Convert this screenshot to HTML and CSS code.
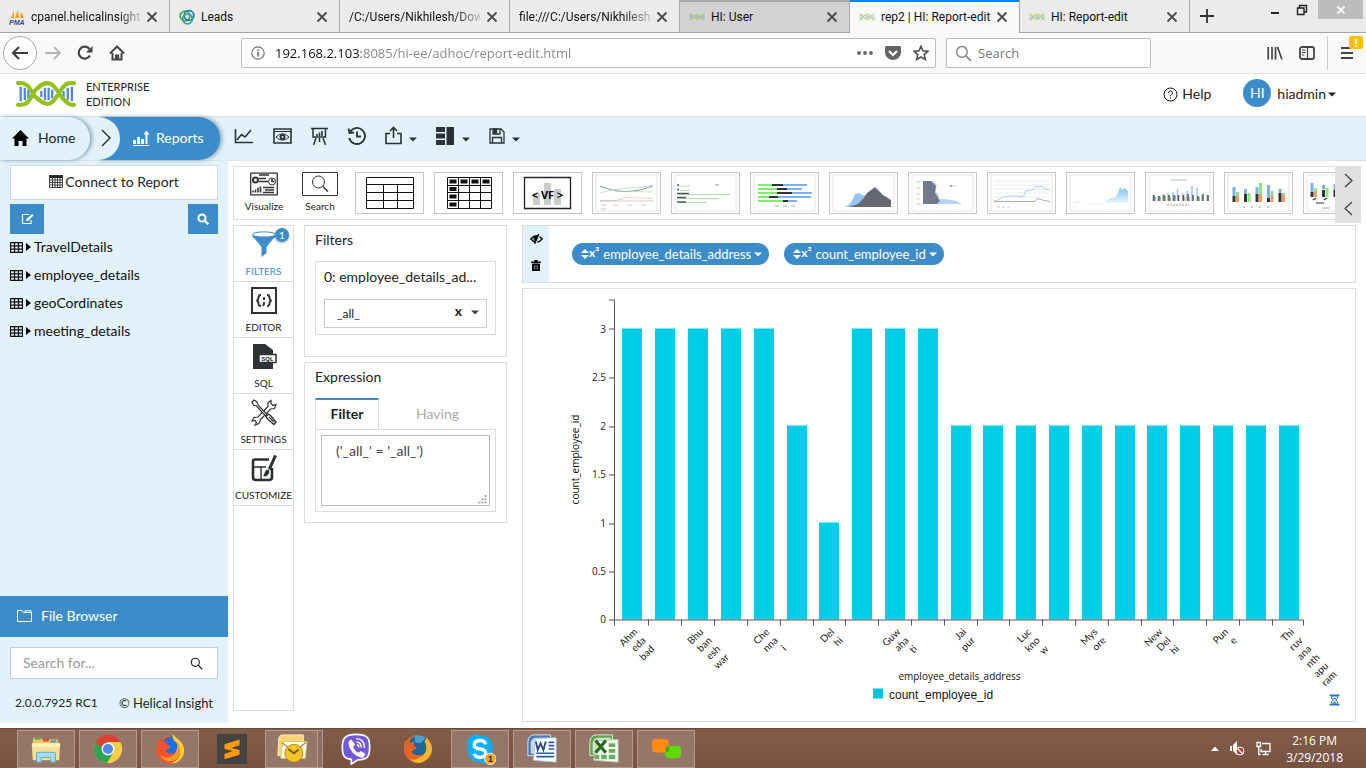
FILE: index.html
```html
<!DOCTYPE html>
<html lang="en">
<head>
<meta charset="utf-8">
<title>rep2 | HI: Report-edit</title>
<link rel="stylesheet" href="styles.css">
</head>
<body>
<svg class="defs" width="0" height="0" aria-hidden="true">
  <symbol id="x" viewBox="0 0 12 12"><path d="M1.500 1.500l9 9M10.500 1.500l-9 9" stroke="#4a4a4a" stroke-width="1.800" fill="none"/></symbol>
  <symbol id="caret" viewBox="0 0 8 5"><path d="M0 .5h8L4 4.500z" fill="currentColor"/></symbol>
  <symbol id="dna" viewBox="0 0 58 26">
    <path d="M4.500 6v14M8.500 7v12M12 9v8M24.500 10v6M28 7v12M31.500 7v12M35 9v8M46 10v6M50 7v12M54 6v14" stroke="#4f86e0" stroke-width="2.200"/>
    <path d="M2 2.500C14 1 14 12 19 16s9 8 14 6 8-10 12-15 7-5 11-4.500M2 23.500C14 25 14 14 19 9s9-8 14-6 8 9 12 14 7 7 11 6.500" fill="none" stroke="#93c11c" stroke-width="4" stroke-linecap="round"/>
  </symbol>
  <symbol id="mag" viewBox="0 0 16 16"><circle cx="6.500" cy="6.500" r="5" fill="none" stroke="currentColor" stroke-width="1.400"/><path d="M10 10l5 5" stroke="currentColor" stroke-width="1.600"/></symbol>
  <symbol id="grid" viewBox="0 0 13 11"><path d="M.5.500h12v10H.5zM.5 3.800h12M.5 7.200h12M4.500.500v10M8.500.500v10" fill="none" stroke="#111" stroke-width="1.300"/></symbol>
  <symbol id="sort" viewBox="0 0 8 12"><path d="M0 5l4-4 4 4zM0 7l4 4 4-4z" fill="#fff"/></symbol>
</svg>

<div class="tabstrip">
  <div class="tab">
    <svg class="fav" viewBox="0 0 16 16"><path d="M2 9l3-7v7zM6 9l3-8 1 8zM11 9l1-6 3 6z" fill="#f79a1b"/><text x="0" y="15.500" class="pma">PMA</text></svg>
    <span class="tab-title faded">cpanel.helicalinsight</span><button class="close" aria-label="Close tab"><svg viewBox="0 0 12 12"><use href="#x"/></svg></button>
  </div>
  <div class="tab">
    <svg class="fav" viewBox="0 0 16 16" fill="none" stroke-width="1.800"><circle cx="6" cy="7" r="4.800" stroke="#4aa83c"/><circle cx="10" cy="6.500" r="4.800" stroke="#1f78b8"/><circle cx="8.500" cy="10" r="4.800" stroke="#2fa5a0"/></svg>
    <span class="tab-title">Leads</span><button class="close" aria-label="Close tab"><svg viewBox="0 0 12 12"><use href="#x"/></svg></button>
  </div>
  <div class="tab"><span class="tab-title faded">/C:/Users/Nikhilesh/Dow</span><button class="close" aria-label="Close tab"><svg viewBox="0 0 12 12"><use href="#x"/></svg></button></div>
  <div class="tab"><span class="tab-title faded">file:///C:/Users/Nikhilesh</span><button class="close" aria-label="Close tab"><svg viewBox="0 0 12 12"><use href="#x"/></svg></button></div>
  <div class="tab hover"><svg class="fav pale" viewBox="0 0 58 26"><use href="#dna"/></svg><span class="tab-title">HI: User</span><button class="close" aria-label="Close tab"><svg viewBox="0 0 12 12"><use href="#x"/></svg></button></div>
  <div class="tab active"><svg class="fav pale" viewBox="0 0 58 26"><use href="#dna"/></svg><span class="tab-title">rep2 | HI: Report-edit</span><button class="close" aria-label="Close tab"><svg viewBox="0 0 12 12"><use href="#x"/></svg></button></div>
  <div class="tab"><svg class="fav pale" viewBox="0 0 58 26"><use href="#dna"/></svg><span class="tab-title">HI: Report-edit</span><button class="close" aria-label="Close tab"><svg viewBox="0 0 12 12"><use href="#x"/></svg></button></div>
  <button class="newtab" aria-label="New tab"><svg width="14" height="14" viewBox="0 0 14 14"><path d="M7 0v14M0 7h14" stroke="#333" stroke-width="1.800"/></svg></button>
  <div class="win">
    <button aria-label="Minimize"><svg width="9" height="12" viewBox="0 0 9 12"><path d="M0 9h8" stroke="#222" stroke-width="2"/></svg></button>
    <button aria-label="Restore"><svg width="12" height="12" viewBox="0 0 12 12"><path d="M1.500 4h6.500v6.500H1.500zM3.500 4V1.500h7V8H8" fill="none" stroke="#222" stroke-width="1.400"/></svg></button>
    <button class="win-close" aria-label="Close"><svg width="10" height="10" viewBox="0 0 10 10"><path d="M1.500 1.500l7 7M8.500 1.500l-7 7" stroke="#fff" stroke-width="1.800"/></svg></button>
  </div>
</div>

<div class="toolbar">
  <button class="back" aria-label="Back"><svg width="18" height="16" viewBox="0 0 18 16"><path d="M17 8H2M8 2L2 8l6 6" fill="none" stroke="#3c3c3c" stroke-width="2"/></svg></button>
  <button aria-label="Forward"><svg width="17" height="16" viewBox="0 0 17 16"><path d="M0 8h15M9 2l6 6-6 6" fill="none" stroke="#b4b4b4" stroke-width="1.800"/></svg></button>
  <button aria-label="Reload"><svg width="16" height="16" viewBox="0 0 16 16"><path d="M13 10.500A6 6 0 1 1 12.500 4" fill="none" stroke="#444" stroke-width="2.200"/><path d="M15.500 1v6.500H9z" fill="#444"/></svg></button>
  <button aria-label="Home page"><svg width="16" height="16" viewBox="0 0 16 16"><path d="M1 8.500L8 1.500l7 7M3.500 8v6.500h9V8M7 14.500v-4h2.200v4" fill="none" stroke="#444" stroke-width="2"/></svg></button>
  <div class="urlbar">
    <svg width="14" height="14" viewBox="0 0 14 14"><circle cx="7" cy="7" r="6.200" fill="none" stroke="#777" stroke-width="1.200"/><path d="M7 6v4.500M7 3.500v1.500" stroke="#666" stroke-width="1.600"/></svg>
    <input class="url" aria-label="Address" value="192.168.2.103:8085/hi-ee/adhoc/report-edit.html">
    <button aria-label="Page actions"><svg width="16" height="16" viewBox="0 0 16 16" fill="#666"><circle cx="2" cy="8" r="1.900"/><circle cx="8" cy="8" r="1.900"/><circle cx="14" cy="8" r="1.900"/></svg></button>
    <button aria-label="Save to Pocket"><svg width="16" height="16" viewBox="0 0 16 16"><path d="M1.500 1h13Q16 1 16 2.500V7.500a8 7.500 0 0 1-16 0V2.500Q0 1 1.500 1z" fill="#666"/><path d="M4 6l4 4 4-4" fill="none" stroke="#fff" stroke-width="2"/></svg></button>
    <button aria-label="Bookmark"><svg width="16" height="16" viewBox="0 0 16 16"><path d="M8 1.300l2 4.500 4.900.5-3.700 3.300 1.100 4.800L8 11.900l-4.300 2.500 1.100-4.800L1.100 6.300 6 5.800z" fill="none" stroke="#555" stroke-width="1.700"/></svg></button>
  </div>
  <div class="searchbar">
    <svg width="17" height="17" viewBox="0 0 16 16" color="#888"><use href="#mag"/></svg>
    <input aria-label="Search the web" placeholder="Search">
  </div>
  <div class="right-tools">
    <button aria-label="Library"><svg width="16" height="16" viewBox="0 0 16 16"><path d="M1.200 2v12.500M5 2v12.500M8.500 2v12.500M10.500 2l4.500 12.500" stroke="#444" stroke-width="1.700" fill="none"/></svg></button>
    <button aria-label="Sidebars"><svg width="16" height="16" viewBox="0 0 16 16"><rect x="1" y="2" width="14" height="12" rx="2" fill="none" stroke="#444" stroke-width="1.800"/><path d="M8.500 2v12M3 5h3.500M3 7.500h3.500M3 10h2.500" stroke="#444" stroke-width="1.200"/></svg></button>
    <button class="menu" aria-label="Menu"><svg width="12" height="14" viewBox="0 0 12 14"><path d="M0 2h12M0 7h12M0 12h12" stroke="#444" stroke-width="2"/></svg><span class="alert">!</span></button>
  </div>
</div>

<header class="brand">
  <svg class="logo" viewBox="0 0 58 26"><use href="#dna"/></svg>
  <div class="edition">ENTERPRISE<br>EDITION</div>
  <a class="help" href="#"><svg width="15" height="15" viewBox="0 0 15 15" fill="none" stroke="#111"><circle cx="7.500" cy="7.500" r="6.500"/><path d="M5.500 6a2 2 0 1 1 2.800 1.800q-.8.400-.8 1.400M7.500 10.300v1.200"/></svg>Help</a>
  <button class="user"><span class="avatar">HI</span><span class="uname">hiadmin</span><svg width="8" height="5" viewBox="0 0 8 5"><use href="#caret"/></svg></button>
</header>

<nav class="crumbs">
  <a class="crumb home" href="#"><svg width="17" height="16" viewBox="0 0 17 16"><path d="M8.500 0L0 8.500h2.500V16h4v-5h4v5h4V8.500H17z"/></svg>Home</a>
  <span class="crumb arrow"><svg width="10" height="18" viewBox="0 0 10 18"><path d="M1 1l8 8-8 8" fill="none" stroke="#222" stroke-width="1.300"/></svg></span>
  <a class="crumb reports" href="#"><svg width="17" height="16" viewBox="0 0 17 16" fill="#fff"><path d="M0 10h3v4H0zM4 7h3v7H4zM8 9h3v5H8zM12.500 4h2v10h-2zM0 15h16v1H0zM10.500 4.500l3-4 3 4z"/></svg>Reports</a>
  <div class="actions">
    <button aria-label="Chart"><svg width="20" height="18" viewBox="0 0 20 18"><path d="M1.500 2v13.500H19M3 13l4.500-5.500L11 10l6-7" fill="none" stroke="#2a3238" stroke-width="1.600"/></svg></button>
    <button aria-label="Preview"><svg width="19" height="16" viewBox="0 0 19 16" fill="none" stroke="#2a3238"><path d="M1 1h17v14H1z" stroke-width="1.600"/><path d="M1 3.500h17"/><path d="M3 9q6.500-6.500 13 0-6.500 6.500-13 0z"/><circle cx="9.500" cy="9" r="2" stroke-width="2"/></svg></button>
    <button aria-label="Present"><svg width="17" height="18" viewBox="0 0 17 18" fill="none" stroke="#2a3238"><path d="M0 1.500h17M2 2v8h12.500V2M5 11l-2.500 7M12 11l2.500 7M8.500 11v4" stroke-width="1.500"/><path d="M6 9V7M8.500 9V5.500M11 9V4" stroke-width="1.600"/></svg></button>
    <button aria-label="History"><svg width="19" height="18" viewBox="0 0 19 18" fill="none" stroke="#2a3238" stroke-width="1.800"><path d="M3 5a8 8 0 1 1-.8 6M10 4.500V9.500h4"/><path d="M1.500 1.500L2.500 6l4.500-.5"/></svg></button>
    <button aria-label="Export"><svg width="17" height="19" viewBox="0 0 17 19" fill="none" stroke="#2a3238" stroke-width="1.600"><path d="M5 7.500H1v10h15v-10h-4M8.500 12V1.500M5 5l3.500-3.500L12 5"/></svg><svg class="dd" width="8" height="5" viewBox="0 0 8 5"><use href="#caret"/></svg></button>
    <button aria-label="Layout"><svg width="19" height="18" viewBox="0 0 19 18" fill="#2a3238"><path d="M0 0h9v5H0zM0 6.500h9v5H0zM0 13h9v5H0zM10.500 0H18v18h-7.500z"/></svg><svg class="dd" width="8" height="5" viewBox="0 0 8 5"><use href="#caret"/></svg></button>
    <button aria-label="Save"><svg width="16" height="16" viewBox="0 0 16 16" fill="none" stroke="#2a3238" stroke-width="1.300"><path d="M1 1h11l3 3v11H1zM4 1v5h7V1M3.500 15V9.500h9V15"/><path d="M5 1h2.500v4H5z" fill="#2a3238"/></svg><svg class="dd" width="8" height="5" viewBox="0 0 8 5"><use href="#caret"/></svg></button>
  </div>
</nav>

<main class="main">
  <aside class="sidebar">
    <button class="connect"><svg width="14" height="13" viewBox="0 0 14 13"><path d="M0 0h14v3H0z" fill="#222"/><path d="M.5.500h13v12H.5zM.5 5h13M.5 7.500h13M.5 10h13M3.500 3v10M6 3v10M8.500 3v10M11 3v10" fill="none" stroke="#333" stroke-width=".9"/></svg>Connect to Report</button>
    <div class="side-tools">
      <button class="sq wide" aria-label="Edit"><svg width="13" height="12" viewBox="0 0 13 12" fill="none" stroke="#fff" stroke-width="1.200"><path d="M8 1.500H1.500v9H10V7"/><path d="M5 8l.5-2L11 1l1.500 1.500L7 8z" fill="#fff" stroke="none"/></svg></button>
      <button class="sq" aria-label="Search tables"><svg width="12" height="12" viewBox="0 0 12 12" fill="none" stroke="#fff"><circle cx="5" cy="5" r="3.600" stroke-width="2"/><path d="M8 8l3.300 3.300" stroke-width="2.400"/></svg></button>
    </div>
    <ul class="tree">
      <li><svg width="13" height="11" viewBox="0 0 13 11"><use href="#grid"/></svg><svg width="5" height="8" viewBox="0 0 5 8"><path d="M0 0l5 4-5 4z"/></svg>TravelDetails</li>
      <li><svg width="13" height="11" viewBox="0 0 13 11"><use href="#grid"/></svg><svg width="5" height="8" viewBox="0 0 5 8"><path d="M0 0l5 4-5 4z"/></svg>employee_details</li>
      <li><svg width="13" height="11" viewBox="0 0 13 11"><use href="#grid"/></svg><svg width="5" height="8" viewBox="0 0 5 8"><path d="M0 0l5 4-5 4z"/></svg>geoCordinates</li>
      <li><svg width="13" height="11" viewBox="0 0 13 11"><use href="#grid"/></svg><svg width="5" height="8" viewBox="0 0 5 8"><path d="M0 0l5 4-5 4z"/></svg>meeting_details</li>
    </ul>
    <button class="filebrowser"><svg width="15" height="12" viewBox="0 0 15 12" fill="none" stroke="#fff"><path d="M.5 11.500V.5h4.500l1.500 2h8v9zM8 2.500V.8h6v2"/></svg>File Browser</button>
    <div class="filesearch"><input aria-label="Search for files" placeholder="Search for..."><button aria-label="Search"><svg width="13" height="13" viewBox="0 0 16 16"><use href="#mag"/></svg></button></div>
    <footer class="side-foot"><span class="ver">2.0.0.7925 RC1</span><span>© Helical Insight</span></footer>
  </aside>

  <section class="content">
    <div class="vizbar">
      <button class="viz"><svg width="28" height="23" viewBox="0 0 28 23" fill="none" stroke="#333"><path d="M.7.700h26.600v21.600H.7z" stroke-width="1.300"/><path d="M9 2.500h10M9 6h7M9 9h9M13 15h11M15 17.500h9M13 20h11" stroke-width="1.300"/><circle cx="5.500" cy="7.500" r="2.500" stroke-width="2"/><circle cx="22" cy="9" r="3.500"/><path d="M22 6.500V9h2.500M3 20v-2M5.500 20v-3M8 20v-5M10.500 20v-6" stroke-width="1.600"/></svg><span>Visualize</span></button>
      <button class="viz"><svg width="36" height="24" viewBox="0 0 36 24" fill="none" stroke="#333"><path d="M.5.500h35v23H.5z"/><circle cx="16.500" cy="10" r="6"/><path d="M21 14.500l5 5" stroke-width="1.500"/></svg><span>Search</span></button>
      <div class="thumbs">
        <button class="thumb" aria-label="Table"><svg viewBox="0 0 67 40" fill="none" stroke="#111"><path d="M10.500 4.500h47v31h-47zM10.500 11.500h47M10.500 19.500h47M10.500 27.500h47M27.500 11.500v24M41.500 11.500v24"/></svg></button>
        <button class="thumb" aria-label="Crosstab"><svg viewBox="0 0 67 40" fill="none" stroke="#111"><path d="M12.500 4.500h44v31h-44zM12.500 12.500h44M12.500 19.500h44M12.500 27.500h44M23.500 4.500v31M34.500 4.500v31M45.500 4.500v31"/><path d="M14.500 8.500h7M25.500 8.500h7M36.500 8.500h7M47.500 8.500h7M14.500 16h7M14.500 23.500h7M14.500 31.500h7" stroke-width="4"/></svg></button>
        <button class="thumb" aria-label="VF"><svg viewBox="0 0 67 40"><path d="M19 20h7v12h-7zM30 10h7v22h-7zM40 16h7v16h-7z" fill="#ccc"/><path d="M10.500 4.500h46v31h-46z" fill="none" stroke="#222" stroke-width="1.300"/><text x="33.500" y="26" text-anchor="middle" class="vf">&lt; VF &gt;</text></svg></button>
        <button class="thumb f" aria-label="Line chart"><svg viewBox="0 0 67 40" fill="none"><path class="fr" d="M3 2h61v36H3z"/><path d="M7 13q15 6 28 5.500T60 13" stroke="#6b7f80" stroke-width=".8"/><path d="M7 20q18-5 30-5t23-3" stroke="#b9daf6" stroke-width=".9"/><path d="M22 18l38 1" stroke="#a5e69b" stroke-width=".7"/><path d="M7 27.500h16l10-3 27 1" stroke="#f4b9a0" stroke-width=".7"/><path d="M7 28h53" stroke="#aab" stroke-width=".6"/><path d="M8 32h5M20 32h5M34 32h5M48 32h5M8 36h5" stroke="#bbb" stroke-width=".8"/></svg></button>
        <button class="thumb f" aria-label="Bar chart"><svg viewBox="0 0 67 40" fill="none"><path class="fr" d="M3 2h61v36H3z"/><path d="M6 13h12M6 17.500h12M6 21.500h52M6 25.500h40M6 29.500h28" stroke="#a5e39c" stroke-width=".9"/><path d="M5 12h2M5 16.500h2M5 20.500h12M5 24.500h9M5 29h9" stroke="#556" stroke-width="1.300"/><path d="M43 12h4" stroke="#ccc" stroke-width="2"/></svg></button>
        <button class="thumb f" aria-label="Stacked bar chart"><svg viewBox="0 0 67 40" fill="none" stroke-width="2"><path class="fr" d="M3 2h61v36H3z"/><path d="M7 12h14M7 16h19M7 20h19M7 24h11M7 28h25" stroke="#82ec70"/><path d="M21 12h11M26 16h10M26 20h15M18 24h9M32 28h5" stroke="#333"/><path d="M32 12h24M36 16h15M41 20h20M27 24h33M37 28h9" stroke="#7cb1ec"/><path d="M24 33h4M32 33h4M40 33h4" stroke="#aaa" stroke-width="1"/></svg></button>
        <button class="thumb f" aria-label="Area chart"><svg viewBox="0 0 67 40"><path class="fr" d="M3 2h61v36H3z"/><path d="M15 34q6-2 10-13l4-1 3 2 3 0 3 12z" fill="#95c5f3"/><path d="M19 34q12-2 18-14l8-6 8 8 8 5v7z" fill="#666a70"/></svg></button>
        <button class="thumb f" aria-label="Inverted area chart"><svg viewBox="0 0 67 40"><path class="fr" d="M3 2h61v36H3z"/><path d="M18 8h6l4 4-2 6 4 4-2 4q18 0 23 4l2 1H18z" fill="#b3d4f2"/><path d="M14 8h8l5 5-1 7 3 4 2 4-3 3H14z" fill="#717b8a"/><path d="M7 9h4M7 15h4M7 21h4M7 26h4M7 31h4" stroke="#f3b9b9"/><path d="M41 13h2" stroke="#555"/><path d="M43 13h4" stroke="#ccc"/></svg></button>
        <button class="thumb f" aria-label="Time series"><svg viewBox="0 0 67 40" fill="none"><path class="fr" d="M3 2h61v36H3z"/><path d="M6 8h56M6 12h56M6 16h56M6 20h56M6 24h56" stroke="#dfeaf5" stroke-width=".8"/><path d="M6 28l4-1 5-3 6-1 8 0 6 1 3-6 6-1 4-4 3 1 3-1 3 3 5 1" stroke="#aed0ef"/><path d="M6 28.500h41l2-3 4 1 3 1 6 1" stroke="#a8a8a8" stroke-width=".9"/><path d="M9 34h14" stroke="#ccc" stroke-dasharray="3 2"/></svg></button>
        <button class="thumb f" aria-label="Gradient area"><svg viewBox="0 0 67 40"><defs><linearGradient id="areafill" x1="0" y1="0" x2="0" y2="1"><stop offset="0" stop-color="#7cc3ee"/><stop offset="1" stop-color="#eef7fd"/></linearGradient></defs><path class="fr" d="M3 2h61v36H3z"/><path d="M6 30l4-2 5 2 14 1 8-1 5-4 6-2 3-4 2-6 2 3 3-2 3 3 0 12H6z" fill="url(#areafill)"/></svg></button>
        <button class="thumb f" aria-label="Column chart"><svg viewBox="0 0 67 40" fill="none"><path class="fr" d="M3 2h61v36H3z"/><path d="M25 7h16" stroke="#aaa" stroke-width=".8"/><path d="M7 28v-6M12 28v-5M17 28v-7M22 28v-8M27 28v-9M31.500 28v-12M36.500 28v-8M41 28v-10M46 28v-15M51 28v-13M56 28v-6M61 28v-6" stroke="#9cc3ea" stroke-width="1.500"/><path d="M8 28v-6M13 28v-5M18 28v-6M23 28v-6M28 28v-6M32.500 28v-6M37.500 28v-6M42 28v-7M47 28v-6M52 28v-5M57 28v-7M62 28v-6" stroke="#555" stroke-width="1.500"/><path d="M9.500 28v-4M14.500 28v-4M19.500 28v-5M24.500 28v-4M29.500 28v-5M39 28v-4M43.500 28v-4M53.500 28v-4" stroke="#a9bb77"/><path d="M21 32h22" stroke="#998" stroke-dasharray="2 1"/></svg></button>
        <button class="thumb f" aria-label="Grouped stacked columns"><svg viewBox="0 0 67 40" fill="none" stroke-width="3"><path class="fr" d="M3 2h61v36H3z"/><path d="M9 23V14M20.500 21V16M32 21V14M43.500 25V12M55 20V16" stroke="#7cb1ec"/><path d="M9 29v-6M20.500 29v-8M32 29v-8M43.500 29v-4M55 29v-9" stroke="#333"/><path d="M12.500 23v-4M24 29v-9M35.500 21V10M47 22v-4M58.500 22v-2" stroke="#8ae878"/><path d="M12.500 29v-6M35.500 29v-8M47 29v-7M58.500 29v-7" stroke="#f49a60"/><path d="M18 34h29" stroke="#999" stroke-width="1" stroke-dasharray="2 6"/></svg></button>
        <button class="thumb f" aria-label="Combined chart"><svg viewBox="0 0 67 40" fill="none" stroke-width="3"><path class="fr" d="M3 2h61v36H3z"/><path d="M8 19V10M19.500 16V12M31 17V11" stroke="#7cb1ec"/><path d="M8 24v-5M19.500 24v-7M31 24v-7" stroke="#333"/><path d="M11.500 19v-4M23 24v-9" stroke="#8ae878"/><path d="M11.500 24v-5" stroke="#f49a60"/><path d="M12 30h8M9 27l3-2M20 27l3-2" stroke="#333" stroke-width="1.200"/><path d="M18 35h8" stroke="#aaa" stroke-width="1"/></svg></button>
      </div>
      <div class="pager"><button aria-label="Next"><svg width="9" height="15" viewBox="0 0 9 15"><path d="M1 1l7 6.500L1 14" fill="none" stroke="#444" stroke-width="1.300"/></svg></button><button aria-label="Previous"><svg width="9" height="15" viewBox="0 0 9 15"><path d="M8 1L1 7.500 8 14" fill="none" stroke="#444" stroke-width="1.300"/></svg></button></div>
    </div>

    <div class="work">
      <div class="rail">
        <button class="rail-item on"><svg width="26" height="27" viewBox="0 0 26 27"><path d="M1 4q0 2 3 4l6.500 8v10l5-4v-6L22 8q3-2 3-4z" fill="#3d8cca"/><ellipse cx="13" cy="3.500" rx="12" ry="2.600" fill="#fff" stroke="#3d8cca"/></svg>FILTERS<span class="count">1</span></button>
        <button class="rail-item"><svg width="26" height="27" viewBox="0 0 26 27"><path d="M1 1h24v25H1z" fill="none" stroke="#333" stroke-width="2"/><path d="M10 8q-2.500 0-2.500 2.500t-2 3q2 .5 2 3T10 19M16 8q2.500 0 2.500 2.500t2 3q-2 .5-2 3T16 19M13 15v2l-1 2" fill="none" stroke="#333" stroke-width="1.900"/><circle cx="13" cy="11.500" r="1.200"/></svg>EDITOR</button>
        <button class="rail-item"><svg width="26" height="27" viewBox="0 0 26 27"><path d="M2 1h12l8 6v19H2z" fill="#2f3336"/><path d="M8 11.500h17v8H8z" fill="#fff" stroke="#2f3336" stroke-width="1.500"/><text x="16.500" y="18" text-anchor="middle" class="sqlmark">SQL</text></svg>SQL</button>
        <button class="rail-item"><svg width="26" height="27" viewBox="0 0 26 27" fill="none" stroke="#333" stroke-width="1.200"><path d="M20 1.500l-3 2v4L7 18l-4 .5-2 3.500 3-.5 1.500 2L4 26l4-1.500 1.500-4L19.500 10l4-.5 1.500-4-3 1-2-2z" fill="#fff"/><path d="M1 3l2-2 3 2 1 3 9 9.500L14.500 17 5.500 7 2.500 6z" fill="#fff"/><path d="M15 17.500l2-2.500 3 2 5 6-2 2.500-6-5z" fill="#fff" stroke-width="1.400"/><path d="M18 18l5 5"/></svg>SETTINGS</button>
        <button class="rail-item"><svg width="26" height="27" viewBox="0 0 26 27" fill="none" stroke="#2b2f31"><path d="M18 4.500H4q-2 0-2 2V22q0 3 3 3h13q3 0 3-3V13" stroke-width="2.600"/><path d="M2 12h13M10 12v12" stroke-width="1.400"/><path d="M24.500.5L18 15" stroke-width="3"/><path d="M17.500 14q3 3-1 7-2 2-5.500 0 2-.5 2-3 1-4 4.500-4z" fill="#2b2f31" stroke="#fff"/></svg>CUSTOMIZE</button>
      </div>

      <div class="panels">
        <section class="panel filters">
          <h2>Filters</h2>
          <div class="fbox">
            <label for="f0">0: employee_details_ad...</label>
            <div class="combo"><select id="f0"><option>_all_</option></select><button class="clear" aria-label="Clear">x</button><svg class="combo-caret" width="8" height="5" viewBox="0 0 8 5"><use href="#caret"/></svg></div>
          </div>
        </section>
        <section class="panel expr">
          <h2>Expression</h2>
          <div class="etabs"><button class="etab sel">Filter</button><button class="etab">Having</button></div>
          <div class="ebody"><textarea aria-label="Filter expression">('_all_' = '_all_')</textarea><svg class="grip" width="9" height="9" viewBox="0 0 9 9" fill="#aaa"><path d="M6.500 0h2v2h-2zM3.500 3.300h2v2h-2zM6.500 3.300h2v2h-2zM.500 6.500h2v2h-2zM3.500 6.500h2v2h-2zM6.500 6.500h2v2h-2z"/></svg></div>
        </section>
      </div>

      <div class="canvas">
        <div class="fields">
          <div class="field-tools">
            <button aria-label="Hide"><svg width="13" height="10" viewBox="0 0 13 10" fill="none" stroke="#000"><path d="M.8 5q5.700-6.500 11.400 0-5.700 6.500-11.400 0z" stroke-width="1.300"/><circle cx="6" cy="4.800" r="2" fill="#000"/><path d="M10 0L5.500 10" stroke="#e1f2fa" stroke-width="1.500"/><path d="M8.800 0L4.500 10" stroke-width="1.300"/></svg></button>
            <button aria-label="Delete"><svg width="10" height="11" viewBox="0 0 10 11"><path d="M0 1.500h3L3.500 0h3L7 1.500h3V3H0zM1 3.500h8V11H1z"/><path d="M3.300 5v4.500M5 5v4.500M6.700 5v4.500" stroke="#9ab" stroke-width=".7"/></svg></button>
          </div>
          <div class="chips">
            <button class="chip"><svg width="8" height="12" viewBox="0 0 8 12"><use href="#sort"/></svg><b>x²</b><span>employee_details_address</span><svg width="8" height="5" viewBox="0 0 8 5"><use href="#caret"/></svg></button>
            <button class="chip"><svg width="8" height="12" viewBox="0 0 8 12"><use href="#sort"/></svg><b>x²</b><span>count_employee_id</span><svg width="8" height="5" viewBox="0 0 8 5"><use href="#caret"/></svg></button>
          </div>
        </div>
        <div class="chart">
          <svg class="plot" viewBox="523 290 832 431" role="img" aria-label="count_employee_id by employee_details_address">
            <path fill="#02cde6" d="M622 329h20v291h-20zM655 329h20v291h-20zM688 329h20v291h-20zM721 329h20v291h-20zM754 329h20v291h-20zM787 426h20v194h-20zM819 523h20v97h-20zM852 329h20v291h-20zM885 329h20v291h-20zM918 329h20v291h-20zM951 426h20v194h-20zM983 426h20v194h-20zM1016 426h20v194h-20zM1049 426h20v194h-20zM1082 426h20v194h-20zM1115 426h20v194h-20zM1147 426h20v194h-20zM1180 426h20v194h-20zM1213 426h20v194h-20zM1246 426h20v194h-20zM1279 426h20v194h-20z"/>
            <path class="axis" d="M609 300.500h5.500v320H609M609 329.500h6M609 378.500h6M609 427.500h6M609 475.500h6M609 524.500h6M609 572.500h6M614.500 626v-5.500h689v5.500M648.500 620v6M681.500 620v6M714.500 620v6M747.500 620v6M780.500 620v6M813.500 620v6M845.500 620v6M878.500 620v6M911.500 620v6M944.500 620v6M977.500 620v6M1009.500 620v6M1042.500 620v6M1075.500 620v6M1108.500 620v6M1141.500 620v6M1173.500 620v6M1206.500 620v6M1239.500 620v6M1272.500 620v6"/>
            <g class="ylab"><text x="606" y="333">3</text><text x="606" y="381">2.5</text><text x="606" y="430">2</text><text x="606" y="478">1.5</text><text x="606" y="527">1</text><text x="606" y="575">0.5</text><text x="606" y="623">0</text></g>
            <text class="ytitle" transform="translate(579 460) rotate(-90)">count_employee_id</text>
            <g class="xlab">
              <text transform="translate(638 633) rotate(-45)"><tspan x="0">Ahm</tspan><tspan x="0" dy="12">eda</tspan><tspan x="0" dy="12">bad</tspan></text>
              <text transform="translate(704 633) rotate(-45)"><tspan x="0">Bhu</tspan><tspan x="0" dy="12">ban</tspan><tspan x="0" dy="12">esh</tspan><tspan x="0" dy="12">war</tspan></text>
              <text transform="translate(770 633) rotate(-45)"><tspan x="0">Che</tspan><tspan x="0" dy="12">nna</tspan><tspan x="0" dy="12">i</tspan></text>
              <text transform="translate(835 633) rotate(-45)"><tspan x="0">Del</tspan><tspan x="0" dy="12">hi</tspan></text>
              <text transform="translate(901 633) rotate(-45)"><tspan x="0">Guw</tspan><tspan x="0" dy="12">aha</tspan><tspan x="0" dy="12">ti</tspan></text>
              <text transform="translate(967 633) rotate(-45)"><tspan x="0">Jai</tspan><tspan x="0" dy="12">pur</tspan></text>
              <text transform="translate(1032 633) rotate(-45)"><tspan x="0">Luc</tspan><tspan x="0" dy="12">kno</tspan><tspan x="0" dy="12">w</tspan></text>
              <text transform="translate(1098 633) rotate(-45)"><tspan x="0">Mys</tspan><tspan x="0" dy="12">ore</tspan></text>
              <text transform="translate(1163 633) rotate(-45)"><tspan x="0">New</tspan><tspan x="0" dy="12">Del</tspan><tspan x="0" dy="12">hi</tspan></text>
              <text transform="translate(1229 633) rotate(-45)"><tspan x="0">Pun</tspan><tspan x="0" dy="12">e</tspan></text>
              <text transform="translate(1295 633) rotate(-45)"><tspan x="0">Thi</tspan><tspan x="0" dy="12">ruv</tspan><tspan x="0" dy="12">ana</tspan><tspan x="0" dy="12">nth</tspan><tspan x="0" dy="12">apu</tspan><tspan x="0" dy="12">ram</tspan></text>
            </g>
            <text class="xtitle" x="959.500" y="680">employee_details_address</text>
            <path d="M873 689h10v10h-10z" fill="#02c4dc"/>
            <text class="legend" x="889" y="699">count_employee_id</text>
            <path d="M1329.500 695h10v1.500h-10zM1329.500 704.500h10v1.500h-10z" fill="#2a73b5"/><path d="M1331 696.500q0 3 2.500 4-2.500 1-2.500 4h7q0-3-2.500-4 2.500-1 2.500-4z" fill="none" stroke="#2a73b5"/><path d="M1332.500 704l2-2.500 2 2.500zM1332.500 698.500h4l-2 1.500z" fill="#2a73b5"/>
          </svg>
        </div>
      </div>
    </div>
  </section>
</main>

<div class="taskbar">
  <div class="apps">
    <button class="app open" aria-label="File Explorer"><svg viewBox="0 0 34 34"><path d="M3 7q0-2 2-2h6l2 2h17v21H3z" fill="#e8c765"/><path d="M5 5h6v2H5z" fill="#46b04a"/><path d="M14 6h6v3h-6z" fill="#d9463a"/><path d="M22 8h6v2h-6z" fill="#4a90d9"/><path d="M2 11h30l-1 18H3z" fill="#f6e193"/><path d="M2 11h30v4H2z" fill="#fbefb9"/><path d="M7 31v-9q0-1.500 1.500-1.500h17q1.500 0 1.500 1.500v9h-5v-5H12v5z" fill="#a8dcf3" stroke="#56a8d0"/></svg></button>
    <button class="app open" aria-label="Chrome"><svg viewBox="0 0 34 34"><circle cx="17" cy="17" r="15" fill="#f7cf46"/><path d="M17 17L4 9.500A15 15 0 0 1 30 9.500H17z" fill="#d94234"/><path d="M17 17h0L4 9.500A15 15 0 0 0 16 32l6.500-11z" fill="#30a353"/><path d="M4 9.500A15 15 0 0 1 30 9.500H17q-6 0-7.500 6z" fill="#d94234"/><circle cx="17" cy="17" r="6.800" fill="#fff"/><circle cx="17" cy="17" r="5.400" fill="#4a8af0"/></svg></button>
    <button class="app open" aria-label="Firefox"><svg viewBox="0 0 34 34"><circle cx="17" cy="18" r="14.500" fill="#f4562c"/><circle cx="18" cy="13.500" r="9.500" fill="#1c6fe0"/><path d="M20 1q2 3 6 6 6 5 6 12-1 12-14 13.500 10-4 10-13 0-6-5-10-4-3-3-8.500z" fill="#fdd12e"/><path d="M24 9q6 6 3 14-3 7-11 7-7-1-9-7 10 5 15-1 4-6 2-13z" fill="#fb9a28"/><path d="M4 8l1-3 4 5 5-2-1 4 4 2q-1 4-5 4 3 5 9 3-3 6-9 5Q4 24 4 8z" fill="#f4512c"/></svg></button>
    <button class="app" aria-label="Sublime Text"><svg viewBox="0 0 34 34"><path d="M1 1h32v32H1z" fill="#434343"/><path d="M9 12l16-5v6l-9 3 9 2v5L9 28v-6l9-3-9-2z" fill="#ff9a0b"/></svg></button>
    <button class="app open stack" aria-label="Outlook"><svg viewBox="0 0 34 34"><path d="M3 5q1-3 4-3h22v22H2z" fill="#f9d675" stroke="#fff1c0"/><path d="M7 9h26l-2 18H5z" fill="#fffdf0" stroke="#ddc16c"/><path d="M6 10l13 10L32 10" fill="none" stroke="#b49342" stroke-width="1.500"/><circle cx="19" cy="21.500" r="9.500" fill="#f5c52c" stroke="#b98512"/><path d="M13 17l6 4.500 5-4" fill="none" stroke="#7d5a10" stroke-width="2"/></svg></button>
    <button class="app" aria-label="Viber"><svg viewBox="0 0 34 34"><path d="M17 1.500c13 0 14.500 4 14.500 14S29 28 19 28.500L12 33v-5C4 27 2.500 24 2.500 15S5 1.500 17 1.500z" fill="#7158d8" stroke="#fff" stroke-width="1.800"/><path d="M9 9l3-2 4 5-2 3q2 5 6 6l2-2 5 3-2 4q-3 1-8-2-8-6-8-15z" fill="#fff"/><path d="M17 6q9 0 9 10M17.500 9.500q5 0 5 6M18 12.500q2 0 2 3" fill="none" stroke="#fff" stroke-width="1.500"/></svg></button>
    <button class="app" aria-label="Firefox Classic"><svg viewBox="0 0 34 34"><circle cx="17" cy="17" r="15" fill="#e66a20"/><circle cx="18" cy="13" r="11" fill="#24669c"/><path d="M13 3q8-2 12 2l-5 6-6-1z" fill="#4ba0cc"/><path d="M26 5q7 7 5.500 15T19 32q-9 0-13-8 12 6 18-2 4-7 0-13z" fill="#f7b72a"/><path d="M3 8l4 3 6-2-1 4 4 3-6 4q2 6 9 3-2 7-9 5Q1 25 2 14z" fill="#e4642a"/></svg></button>
    <button class="app open" aria-label="Skype"><svg viewBox="0 0 34 34"><path d="M10 2q4-2 7 1 11-1 13 9 1 4 0 8 3 9-5 12-4 1-7-1Q6 32 4 20q-1-3 0-6-2-9 6-12z" fill="#0bb0f0"/><path d="M23 12q-1-4-6-4t-6 4 6 5 6 5-6 4-6-4" fill="none" stroke="#fff" stroke-width="3.600"/><circle cx="28" cy="27.500" r="6" fill="#f5a623" stroke="#fff2d8"/><text x="28" y="30.500" text-anchor="middle" class="badge">1</text></svg></button>
    <button class="app open" aria-label="Word"><svg viewBox="0 0 34 34"><path d="M2 9q1-7 7-7h17v22H2z" fill="#4a78b8" stroke="#d9e6f5"/><path d="M5 10q1-5 6-5h13v17H5z" fill="#c5d8ef"/><path d="M10 6l22-1v26L8 29z" fill="#fff" stroke="#b9c8dc"/><path d="M24 10h6M24 13.500h6M24 17h6M11 21.500h19M11 25h19" stroke="#2d5aa6" stroke-width="1.800"/><path d="M10.500 9l2 9 3-7 3 7 2.500-9" fill="none" stroke="#284c8c" stroke-width="2"/></svg></button>
    <button class="app open" aria-label="Excel"><svg viewBox="0 0 34 34"><path d="M2 9q1-7 7-7h17v22H2z" fill="#5fa352" stroke="#e0f0da"/><path d="M5 10q1-5 6-5h13v17H5z" fill="#cfe6c9"/><path d="M10 8l22-1v24L6 29z" fill="#f8fff5" stroke="#a7c99d"/><path d="M22 11h7v4h-7zM22 17h7v4h-7zM22 23h7v5h-7zM14 23h6v5h-6zM7 23h5v5H7z" fill="#6fae62"/><path d="M8 8l11 13M19 8L8 21" stroke="#286a25" stroke-width="3.500"/></svg></button>
    <button class="app open" aria-label="Chat"><svg viewBox="0 0 34 34"><path d="M3 7q8-2 16 0 2 5 1 13-9 2-17 0-2-7 0-13z" fill="#ff8b14"/><path d="M17 15q8-2 15-1 2 6 0 12-8 2-15 0-2-6 0-11z" fill="#61d800"/><path d="M17 15q2-1 3.300-.8V20l-3.800.3z" fill="#4c9d1a"/></svg></button>
  </div>
  <div class="tray">
    <svg width="8" height="5" viewBox="0 0 8 5"><path d="M0 5l4-4.500L8 5z" fill="#fff"/></svg>
    <svg width="15" height="15" viewBox="0 0 15 15"><path d="M0 5h2v5H0zM3 4l4-4v14l-4-4z" fill="#fff"/><circle cx="10" cy="10" r="4" fill="#c33" stroke="#fff" stroke-width="1"/><path d="M7.500 7.500l5 5" stroke="#fff" stroke-width="1.500"/></svg>
    <svg width="15" height="15" viewBox="0 0 15 15" fill="none" stroke="#fff" stroke-width="1.300"><path d="M6 2.500h8v8H5V8M9.500 10.500V13M6.500 13.500h6"/><path d="M1 1.500h3.500v4H1zM2.700 5.500v8h2"/></svg>
    <div class="clock"><div>2:16 PM</div><div>3/29/2018</div></div>
  </div>
</div>
</body>
</html>
```
FILE: styles.css
```css
* { box-sizing: border-box; }
body {
  margin: 0;
  min-height: 100vh;
  display: flex;
  flex-direction: column;
  background: #fff;
  color: #222;
  font: 14px/20px Lato, "Open Sans", sans-serif;
}
button { font: inherit; color: inherit; background: none; border: 0; padding: 0; margin: 0; display: flex; align-items: center; justify-content: center; }
input, textarea, select { font: inherit; color: inherit; border: 0; outline: 0; background: none; padding: 0; margin: 0; min-width: 0; border-radius: 0; }
a { color: inherit; text-decoration: none; }
svg { display: block; flex: none; }
h2 { margin: 0; font-size: 14px; font-weight: 400; line-height: 20px; }
ul { list-style: none; margin: 0; padding: 0; }
.defs { position: absolute; }

/* browser chrome */
.tabstrip { display: flex; height: 33px; background: #ebebeb; border-bottom: 1px solid #a3a3a3; font: 12px/16px Roboto, "Open Sans", sans-serif; color: #111; }
.tab { flex: 0 1 170px; min-width: 0; display: flex; align-items: center; gap: 6px; padding: 2px 11px 0 9px; border-right: 1px solid #a8a8a8; }
.fav { width: 16px; height: 16px; }
.pale { opacity: .6; }
.pma { font: italic bold 7px "Liberation Sans", sans-serif; fill: #334a80; }
.tab-title { flex: 1; min-width: 0; white-space: nowrap; }
.faded { overflow: hidden; mask-image: linear-gradient(90deg, #000 80%, rgba(0,0,0,.2)); }
.close { width: 12px; height: 12px; }
.close svg { width: 12px; height: 12px; }
.tab.hover { background: #d2d2d2; box-shadow: inset 0 2px #aaa; }
.tab.active { background: #f9f9f9; box-shadow: inset 0 2px #0a84ff; margin-bottom: -1px; padding-bottom: 1px; }
.newtab { width: 34px; }
.win { margin-left: auto; display: flex; align-items: flex-start; gap: 16px; padding-right: 3px; }
.win button { height: 19px; }
.win .win-close { width: 45px; background: #bcbcbc; margin-left: -6px; }

.toolbar { display: flex; align-items: center; height: 41px; padding: 0 5px 0 3px; gap: 12px; background: #f9f9f9; border-bottom: 1px solid #ddd; }
.toolbar > button { width: 20px; }
.toolbar > .back { width: 34px; height: 34px; border: 1px solid #aaa; border-radius: 50%; background: #fff; margin-right: -6px; }
.urlbar, .searchbar { display: flex; align-items: center; height: 30px; background: #fff; border: 1px solid #bbb; border-radius: 2px; font: 13px/20px "Open Sans", sans-serif; }
.urlbar { flex: 1; margin-left: 102px; padding: 0 6px 0 9px; gap: 12px; }
.url { flex: 1; color: transparent; background: linear-gradient(90deg, #111 86px, #858585 86px); background-clip: text; margin-left: -2px; }
.searchbar { flex: 0 1 204px; padding: 0 8px; gap: 6px; margin-left: -2px; }
.searchbar input { flex: 1; }
.searchbar input::placeholder { color: #777; opacity: 1; }
.right-tools { display: flex; align-items: center; gap: 16px; margin-left: 104px; }
.menu { position: relative; height: 34px; padding-left: 13px; padding-right: 8px; border-left: 1px solid #ccc; margin-left: -4px; }
.alert { position: absolute; top: 0; right: -2px; width: 14px; height: 13px; border-radius: 2px; background: #ffbf00; color: #fff; font: bold 11px/13px "Open Sans", sans-serif; text-align: center; }

/* application header */
.brand { display: flex; align-items: center; height: 42px; padding: 0 30px 2px 16px; }
.logo { width: 60px; height: 28px; }
.edition { margin-left: 10px; font-size: 11px; line-height: 15px; }
.help { margin-left: auto; display: flex; align-items: center; gap: 4px; }
.user { margin-left: 32px; }
.avatar { width: 28px; height: 28px; border-radius: 50%; background: #3d8cca; color: #fff; line-height: 28px; text-align: center; margin: 0 6px 2px 0; }
.uname { margin-right: 2px; }

.crumbs { display: flex; align-items: stretch; height: 45px; background: #e1f2fa; border: 1px solid #dce4e9; border-width: 1px 0; }
.crumb { display: flex; align-items: center; position: relative; border-radius: 0 22px 22px 0; box-shadow: 2px 0 4px rgba(40,80,110,.5); }
.home { z-index: 3; width: 90px; padding: 0 0 1px 12px; gap: 9px; background: #e1f2fa; }
.arrow { z-index: 2; width: 52px; margin-left: -22px; padding: 0 0 2px 33px; background: #e1f2fa; box-shadow: none; }
.reports { z-index: 1; width: 122px; margin-left: -22px; padding: 0 0 1px 35px; gap: 6px; background: #3d8cca; color: #fff; }
.actions { display: flex; align-items: center; padding: 0 0 6px 14px; gap: 19px; color: #2a3238; }
.dd { margin: 8px 0 0 7px; }

/* main layout */
.main { flex: 1; display: flex; min-height: 0; }
.sidebar { width: 228px; display: flex; flex-direction: column; background: #e1f2fa; padding: 4px 10px 8px; margin-bottom: 5px; }
.connect { height: 35px; background: #fff; border: 1px solid #d3dade; gap: 2px; padding-bottom: 2px; }
.side-tools { display: flex; justify-content: space-between; margin: 4px 0 -1px; }
.sq { width: 30px; height: 30px; background: #3d8cca; }
.sq.wide { width: 34px; }
.tree li { display: flex; align-items: center; height: 28px; gap: 3px; color: #111; }
.filebrowser { margin: auto -10px 10px; height: 41px; background: #3d8cca; color: #fff; justify-content: flex-start; padding: 0 0 2px 17px; gap: 9px; }
.filesearch { display: flex; height: 32px; background: #fff; border: 1px solid #c5cdd2; }
.filesearch input { flex: 1; padding-left: 12px; }
.filesearch input::placeholder { color: #999; opacity: 1; }
.filesearch button { width: 42px; }
.side-foot { display: flex; justify-content: space-between; align-items: center; padding: 14px 5px 2px; font-size: 13px; }
.ver { font-size: 12px; }

.content { flex: 1; min-width: 0; display: flex; flex-direction: column; padding: 5px 5px 6px; gap: 5px; }
.vizbar { position: relative; display: flex; align-items: center; height: 54px; border: 1px solid #ddd; border-right: 0; padding-left: 9px; }
.viz { flex-direction: column; width: 42px; margin-right: 14px; font-size: 10px; line-height: 16px; }
.viz svg { height: 24px; }
.viz span { padding-top: 2px; }
.thumbs { flex: 1; min-width: 0; display: flex; gap: 10px; overflow: hidden; }
.thumb { flex: none; width: 69px; height: 42px; border: 1px solid #c6c6c6; }
.thumb svg { width: 67px; height: 40px; }
.fr { fill: none; stroke: #e6e6e6; stroke-width: 1; }
.vf { font: bold 11px "Open Sans", sans-serif; fill: #000; }
.badge { font: bold 9px "Liberation Sans", sans-serif; fill: #222; }
.pager { position: absolute; top: -1px; right: 0; width: 26px; height: 57px; background: #e0e0e0; display: flex; flex-direction: column; }
.pager button { flex: 1; }

.work { flex: 1; display: flex; min-height: 0; }
.rail { width: 61px; border: 1px solid #ddd; margin-bottom: 11px; }
.rail-item { position: relative; width: 100%; height: 56px; flex-direction: column; gap: 5px; padding-top: 3px; border-bottom: 1px solid #ddd; font-size: 10px; line-height: 16px; }
.rail-item.on { color: #3d8cca; }
.sqlmark { font: bold 6px "Liberation Sans", sans-serif; fill: #222; }
.count { position: absolute; top: 2px; right: 4px; width: 14px; height: 14px; border-radius: 50%; background: #3d8cca; color: #fff; font-size: 10px; line-height: 14px; text-align: center; box-shadow: 0 1px 3px rgba(0,0,0,.3); }
.panels { width: 203px; margin: 0 15px 0 10px; display: flex; flex-direction: column; gap: 5px; }
.panel { border: 1px solid #ddd; padding: 4px 10px 10px; }
.filters { padding-bottom: 21px; }
.fbox { margin-top: 11px; border: 1px solid #ddd; padding: 5px 8px 6px; }
.fbox label { display: block; white-space: nowrap; }
.combo { position: relative; margin-top: 12px; }
.combo select { width: 100%; height: 29px; border: 1px solid #ccc; padding-left: 12px; font-size: 12px; appearance: none; }
.clear { position: absolute; right: 25px; top: 2px; height: 20px; font-weight: 700; }
.combo-caret { position: absolute; right: 8px; top: 11px; color: #444; }
.etabs { display: flex; margin-top: 11px; }
.etab { width: 64px; height: 32px; }
.etab.sel { border: 1px solid #ddd; border-top: 2px solid #3d8cca; border-bottom: 0; font-weight: 700; background: #fff; margin-bottom: -1px; position: relative; padding-bottom: 2px; }
.etab:not(.sel) { flex: 1; color: #aaa; height: 31px; }
.ebody { position: relative; border: 1px solid #ddd; padding: 5px; }
.ebody textarea { display: block; width: 100%; height: 71px; border: 1px solid #bbb; resize: none; padding: 5px 14px; color: #444; }
.grip { position: absolute; right: 8px; bottom: 7px; }

.canvas { flex: 1; min-width: 0; display: flex; flex-direction: column; gap: 5px; margin-right: 5px; }
.fields { display: flex; height: 58px; border: 1px solid #ddd; }
.field-tools { width: 26px; background: #e1f2fa; display: flex; flex-direction: column; align-items: center; padding: 8px 0 11px; justify-content: space-between; }
.chips { display: flex; align-items: center; gap: 15px; padding-left: 23px; }
.chip { height: 22px; border-radius: 11px; background: #3d8cca; color: #fff; padding: 0 7px 0 9px; font-size: 13px; }
.chip b { font-size: 12px; margin-right: 4px; padding-bottom: 3px; }
.chip svg:last-child { margin-left: 3px; }
.chart { flex: 1; min-height: 0; border: 1px solid #ddd; }
.plot { width: 100%; height: 100%; }
.axis { fill: none; stroke: #555; stroke-width: 1; }
.ylab text { font: 10px "Open Sans", sans-serif; text-anchor: end; fill: #222; }
.ytitle { font: 10px "Open Sans", sans-serif; text-anchor: middle; fill: #111; }
.xlab text { font: 10px Lato, sans-serif; text-anchor: end; fill: #222; }
.xtitle { font: 10px "Open Sans", sans-serif; text-anchor: middle; fill: #111; }
.legend { font: 12px "Liberation Sans", sans-serif; fill: #111; }

/* desktop taskbar */
.taskbar { display: flex; justify-content: space-between; height: 40px; background: linear-gradient(#805c49, #775340); border-top: 1px solid #6a4938; padding: 0 23px 0 17px; color: #fff; }
.apps { display: flex; gap: 4px; padding-top: 1px; }
.app { width: 58px; height: 38px; }
.app svg { width: 32px; height: 32px; }
.app.open { border: 1px solid #b39a8d; background: #957668; }
.app.stack { box-shadow: inset -4px 0 #8d6e60, inset -5px 0 #b39a8d; padding-right: 5px; }
.tray { display: flex; align-items: center; gap: 11px; }
.clock { font: 12px/17px "Open Sans", sans-serif; text-align: center; margin-left: 4px; }
```
